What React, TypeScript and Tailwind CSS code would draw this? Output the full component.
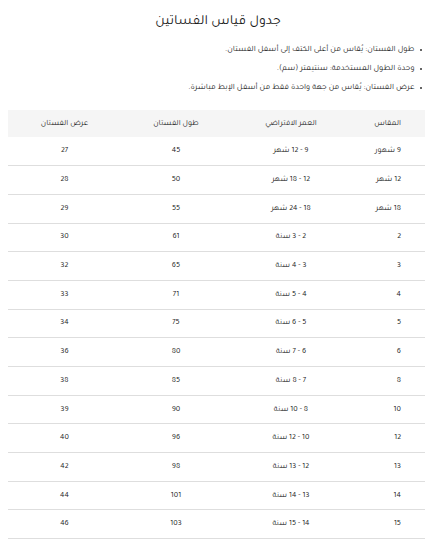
import React from "react";

const rows: [string, string, string, string][] = [
  ["9 شهور", "9 - 12 شهر", "45", "27"],
  ["12 شهر", "12 - 18 شهر", "50", "28"],
  ["18 شهر", "18 - 24 شهر", "55", "29"],
  ["2", "2 - 3 سنة", "61", "30"],
  ["3", "3 - 4 سنة", "65", "32"],
  ["4", "4 - 5 سنة", "71", "33"],
  ["5", "5 - 6 سنة", "75", "34"],
  ["6", "6 - 7 سنة", "80", "36"],
  ["8", "7 - 8 سنة", "85", "38"],
  ["10", "8 - 10 سنة", "90", "39"],
  ["12", "10 - 12 سنة", "96", "40"],
  ["13", "12 - 13 سنة", "98", "42"],
  ["14", "13 - 14 سنة", "101", "44"],
  ["15", "14 - 15 سنة", "103", "46"],
];

const bullets = [
  "طول الفستان: يُقاس من أعلى الكتف إلى أسفل الفستان.",
  "وحدة الطول المستخدمة: سنتيمتر (سم).",
  "عرض الفستان: يُقاس من جهة واحدة فقط من أسفل الإبط مباشرة.",
];

export default function App() {
  return (
    <div
      dir="rtl"
      className="w-[436px] bg-white text-[#222] px-[11px]"
      style={{ fontFamily: 'Tajawal, "Noto Sans Arabic", "DejaVu Sans", sans-serif' }}
    >
      <h2 className="text-center text-[14px] leading-[24px] pt-[10px] text-[#1a1a1a]">جدول قياس الفساتين</h2>
      <ul className="mt-[6.5px] pr-[3px] text-[8.3px] leading-[19px] text-[#1a1a1a]">
        {bullets.map((b) => (
          <li key={b} className="flex items-center gap-[5px]">
            <span className="w-[2.5px] h-[2.5px] rounded-full bg-[#333] shrink-0" />
            <span>{b}</span>
          </li>
        ))}
      </ul>
      <div className="mt-[12.5px] -ml-[3px]">
        <table className="w-[417px] table-fixed border-collapse text-[8px] text-[#222]">
          <colgroup>
            <col className="w-[74px]" />
            <col className="w-[120px]" />
            <col className="w-[110px]" />
            <col className="w-[113px]" />
          </colgroup>
          <thead>
            <tr className="bg-[#f5f5f5] h-[27px]">
              <th className="text-right pr-[24px] font-normal">المقاس</th>
              <th className="text-center font-normal">العمر الافتراضي</th>
              <th className="text-center font-normal">طول الفستان</th>
              <th className="text-center font-normal">عرض الفستان</th>
            </tr>
          </thead>
          <tbody>
            {rows.map((r, i) => (
              <tr key={i} className="h-[28.7px] border-b border-[#dedede]">
                <td className="text-right pr-[24px]">{r[0]}</td>
                <td className="text-center">{r[1]}</td>
                <td className="text-center">{r[2]}</td>
                <td className="text-center">{r[3]}</td>
              </tr>
            ))}
          </tbody>
        </table>
      </div>
    </div>
  );
}
